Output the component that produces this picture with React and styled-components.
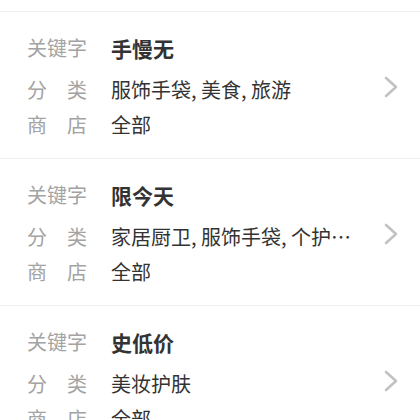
import React from "react";
import styled, { createGlobalStyle } from "styled-components";

const Global = createGlobalStyle`
  html, body { margin: 0; padding: 0; background: #fff; }
  body { font-family: "Noto Sans CJK SC", "Noto Sans", sans-serif; }
`;

const List = styled.div`
  padding-top: 11px;
`;

const Item = styled.div`
  display: flex;
  align-items: center;
  border-top: 1px solid #efefef;
  padding: 22px 22px 19px 27px;
`;

const Body = styled.div`
  flex: 1;
  min-width: 0;
  display: flex;
  flex-direction: column;
`;

const Row = styled.div`
  display: flex;
  align-items: center;
  height: 28px;
  margin-bottom: ${(p) => (p.$head ? "14px" : "7px")};
  &:last-child { margin-bottom: 0; }
`;

const Label = styled.div`
  width: 60px;
  flex: none;
  display: flex;
  justify-content: space-between;
  margin-right: 24px;
  font-size: 20px;
  line-height: 28px;
  color: #a3a3a3;
`;

const Value = styled.div`
  flex: 1;
  min-width: 0;
  max-width: 244px;
  font-size: ${(p) => (p.$bold ? "21px" : "20px")};
  font-weight: ${(p) => (p.$bold ? 700 : 400)};
  line-height: 28px;
  color: #333;
  white-space: nowrap;
  overflow: hidden;
  text-overflow: ellipsis;
`;

const Chevron = styled.svg`
  flex: none;
  width: 14px;
  height: 22px;
  margin-left: 12px;
`;

const items = [
  { kw: "手慢无", cat: "服饰手袋, 美食, 旅游", shop: "全部" },
  { kw: "限今天", cat: "家居厨卫, 服饰手袋, 个护化妆, 数码", shop: "全部" },
  { kw: "史低价", cat: "美妆护肤", shop: "全部" },
];

const L = ({ text }) => (
  <Label>
    {text.split("").map((c, i) => (
      <span key={i}>{c}</span>
    ))}
  </Label>
);

export default function App() {
  return (
    <>
      <Global />
      <List>
        {items.map((it, i) => (
          <Item key={i}>
            <Body>
              <Row $head>
                <L text="关键字" />
                <Value $bold>{it.kw}</Value>
              </Row>
              <Row>
                <L text="分类" />
                <Value>{it.cat}</Value>
              </Row>
              <Row>
                <L text="商店" />
                <Value>{it.shop}</Value>
              </Row>
            </Body>
            <Chevron viewBox="0 0 14 22">
              <path d="M2 2 L12 11 L2 20" fill="none" stroke="#c2c2c2" strokeWidth="2.6" strokeLinecap="round" strokeLinejoin="round" />
            </Chevron>
          </Item>
        ))}
      </List>
    </>
  );
}
